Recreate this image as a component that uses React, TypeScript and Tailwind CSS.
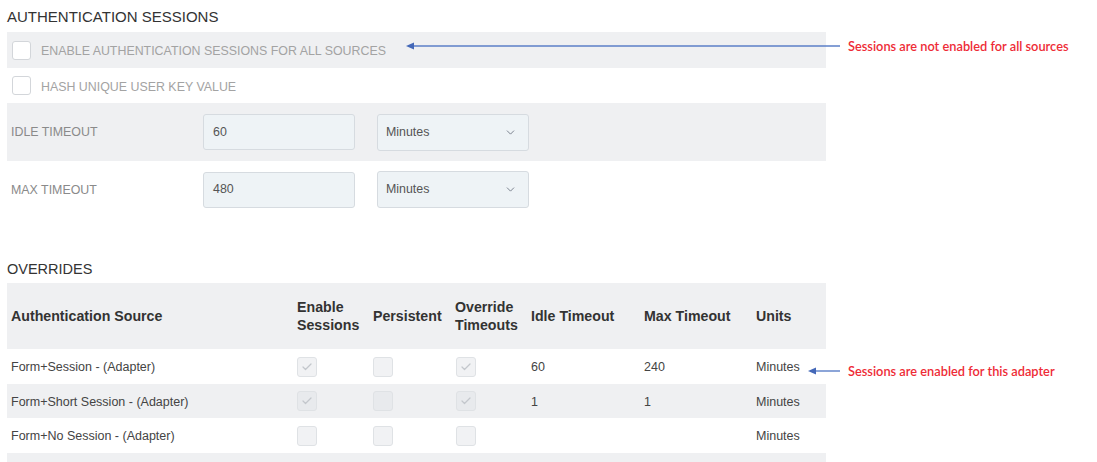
import { ChevronDown, Check } from 'lucide-react'

const overrides = [
  { source: 'Form+Session - (Adapter)', enable: true, persistent: false, override: true, idle: '60', max: '240', units: 'Minutes' },
  { source: 'Form+Short Session - (Adapter)', enable: true, persistent: false, override: true, idle: '1', max: '1', units: 'Minutes' },
  { source: 'Form+No Session - (Adapter)', enable: false, persistent: false, override: false, idle: '', max: '', units: 'Minutes' },
  { source: '', enable: false, persistent: false, override: false, idle: '', max: '', units: '' },
]

function Box({ checked }: { checked?: boolean }) {
  return (
    <div className="w-[19px] h-[19px] rounded-[3px] border border-[#d3d6da] bg-white" aria-checked={checked} />
  )
}

function DisabledBox({ checked, shaded }: { checked: boolean; shaded: boolean }) {
  return (
    <div
      className={`w-[20px] h-[20px] rounded-[3px] border border-[#dfe2e5] flex items-center justify-center ${
        shaded ? 'bg-[#e8eaed]' : 'bg-[#f1f2f4]'
      }`}
    >
      {checked && <Check size={12} strokeWidth={2.5} className="text-[#c3c7cc]" />}
    </div>
  )
}

function Arrow({ x1, x2, y }: { x1: number; x2: number; y: number }) {
  return (
    <svg className="absolute" style={{ left: x1, top: y - 5 }} width={x2 - x1} height={10}>
      <line x1={6} y1={5} x2={x2 - x1} y2={5} stroke="#5b7fc7" strokeWidth={1.4} />
      <polygon points="0,5 8,1.5 8,8.5" fill="#4468b8" />
    </svg>
  )
}

export default function App() {
  return (
    <div className="relative w-[1097px] h-[462px] bg-white overflow-hidden font-['Liberation_Sans',Arial,sans-serif]">
      <div className="w-[819px] ml-[7px] pt-[9px]">
        <h2 className="text-[15px] leading-[16px] text-[#333]">AUTHENTICATION SESSIONS</h2>

        {/* Session settings */}
        <div className="mt-[7px]">
          <div className="h-[36px] bg-[#eff0f2] flex items-center pl-[5px]">
            <Box />
            <span className="ml-[10px] pt-[3px] text-[12.4px] text-[#a3a3a3]">ENABLE AUTHENTICATION SESSIONS FOR ALL SOURCES</span>
          </div>
          <div className="h-[35px] flex items-center pl-[5px]">
            <Box />
            <span className="ml-[10px] pt-[3px] text-[12.4px] text-[#a3a3a3]">HASH UNIQUE USER KEY VALUE</span>
          </div>
          {[
            { label: 'IDLE TIMEOUT', value: '60', bg: 'bg-[#eff0f2]', h: 'h-[58px]' },
            { label: 'MAX TIMEOUT', value: '480', bg: 'bg-white', h: 'h-[57px]' },
          ].map((row) => (
            <div key={row.label} className={`${row.h} ${row.bg} flex items-center`}>
              <span className="w-[196px] pl-[4px] pt-[1px] text-[12.4px] text-[#8a8a8a]">{row.label}</span>
              <div className="w-[152px] h-[36px] rounded-[3px] border border-[#d6dbe0] bg-[#eef3f6] flex items-center pl-[9px] text-[12.4px] text-[#555]">
                {row.value}
              </div>
              <div className="ml-[22px] w-[152px] h-[37px] rounded-[3px] border border-[#d6dbe0] bg-[#eef3f6] flex items-center justify-between pl-[8px] pr-[11px] text-[12.4px] text-[#555]">
                <span>Minutes</span>
                <ChevronDown size={13} strokeWidth={1.6} className="text-[#6b7280]" />
              </div>
            </div>
          ))}
        </div>

        <h2 className="mt-[43px] mb-[6px] text-[14.5px] leading-[16px] text-[#333]">OVERRIDES</h2>

        {/* Overrides table */}
        <table className="w-[819px] table-fixed border-collapse">
          <colgroup>
            <col className="w-[286px]" />
            <col className="w-[76px]" />
            <col className="w-[82px]" />
            <col className="w-[76px]" />
            <col className="w-[113px]" />
            <col className="w-[112px]" />
            <col className="w-[74px]" />
          </colgroup>
          <thead>
            <tr className="h-[66px] bg-[#eff0f2] text-left text-[14.2px] leading-[18px] font-bold text-[#333]">
              <th className="pl-[4px] font-bold">Authentication Source</th>
              <th className="pl-[4px] font-bold">Enable<br />Sessions</th>
              <th className="pl-[4px] font-bold">Persistent</th>
              <th className="pl-[4px] font-bold">Override<br />Timeouts</th>
              <th className="pl-[4px] font-bold">Idle Timeout</th>
              <th className="pl-[4px] font-bold">Max Timeout</th>
              <th className="pl-[4px] font-bold">Units</th>
            </tr>
          </thead>
          <tbody className="text-[12.5px] text-[#444]">
            {overrides.map((row, i) => {
              const shaded = i % 2 === 1
              return (
                <tr key={i} className={`${i === 1 ? 'h-[34px]' : 'h-[35px]'} ${shaded ? 'bg-[#eff0f2]' : 'bg-white'}`}>
                  <td className="pl-[4px] pt-[2px]">{row.source}</td>
                  {row.source ? (
                    <>
                      <td className="pl-[4px]"><DisabledBox checked={row.enable} shaded={shaded} /></td>
                      <td className="pl-[4px]"><DisabledBox checked={row.persistent} shaded={shaded} /></td>
                      <td className="pl-[5px]"><DisabledBox checked={row.override} shaded={shaded} /></td>
                    </>
                  ) : (
                    <>
                      <td />
                      <td />
                      <td />
                    </>
                  )}
                  <td className="pl-[4px] pt-[2px]">{row.idle}</td>
                  <td className="pl-[4px] pt-[2px]">{row.max}</td>
                  <td className="pl-[4px] pt-[2px]">{row.units}</td>
                </tr>
              )
            })}
          </tbody>
        </table>
      </div>

      {/* Annotations */}
      <Arrow x1={406} x2={840} y={46} />
      <span className="absolute left-[848px] top-[37px] text-[12.8px] leading-[18px] font-semibold text-[#ee2b36] font-['Lato',sans-serif]">
        Sessions are not enabled for all sources
      </span>
      <Arrow x1={808} x2={840} y={371} />
      <span className="absolute left-[848px] top-[362px] text-[12.8px] leading-[18px] font-semibold text-[#ee2b36] font-['Lato',sans-serif]">
        Sessions are enabled for this adapter
      </span>
    </div>
  )
}
